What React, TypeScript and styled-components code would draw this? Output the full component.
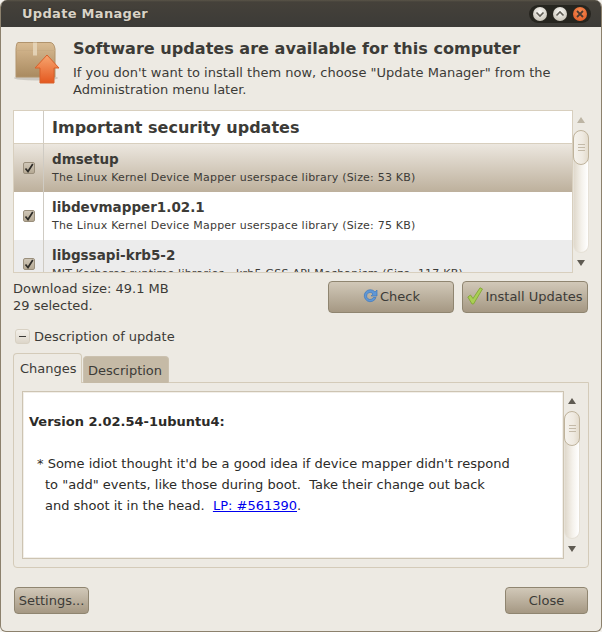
import React from "react";
import styled, { createGlobalStyle } from "styled-components";

const Global = createGlobalStyle`
  html, body { margin: 0; padding: 0; background: #f4f2ee; }
  * { box-sizing: border-box; }
`;

const Win = styled.div`
  width: 602px;
  height: 632px;
  display: flex;
  flex-direction: column;
  overflow: hidden;
  background: #edeae3;
  border: 1px solid #8c816d;
  border-top: 0;
  border-radius: 7px 7px 6px 6px;
  font-family: "DejaVu Sans", sans-serif;
  font-size: 13px;
  line-height: 17px;
  color: #3c3b37;
`;

const TitleBar = styled.div`
  height: 27px;
  flex: none;
  margin: 0 -1px;
  display: flex;
  align-items: center;
  justify-content: space-between;
  padding: 0 11px 0 22px;
  background: linear-gradient(#5a5448 0, #45413a 2px, #3c3b37 100%);
`;

const WinTitle = styled.div`
  font-weight: bold;
  font-size: 13px;
  letter-spacing: 0.3px;
  color: #d9d3c6;
  text-shadow: 0 0 2px #2a2925;
`;

const Controls = styled.div`
  display: flex;
  align-items: center;
  gap: 4px;
  height: 18px;
  padding: 0 3px;
  border-radius: 9px;
  background: #26251f;
`;

const WmDot = styled.svg`
  display: block;
  width: 16px;
  height: 16px;
`;

const Body = styled.div`
  flex: 1;
  display: flex;
  flex-direction: column;
  padding: 0 12px;
`;

const Header = styled.div`
  height: 83px;
  display: flex;
  padding-top: 13px;
  gap: 11px;
`;

const PackageSvg = styled.svg`
  flex: none;
  width: 48px;
  height: 48px;
  margin: 1px 0 0 1px;
`;

const HeaderTitle = styled.div`
  font-weight: bold;
  font-size: 16.07px;
  line-height: 17px;
  margin-bottom: 7px;
`;

const HeaderText = styled.div`
  width: 500px;
`;

const ListArea = styled.div`
  display: flex;
  height: 163px;
`;

const List = styled.div`
  width: 560px;
  height: 163px;
  overflow: hidden;
  border: 1px solid #d8cfbe;
  background: #fff;
`;

const Row = styled.div<{ $tone: "head" | "selected" | "white" | "grey" }>`
  display: flex;
  flex: none;
  height: ${(p) => (p.$tone === "head" ? "33px" : "48px")};
  background: ${(p) =>
    p.$tone === "selected"
      ? "linear-gradient(#ece7df, #bdb09c)"
      : p.$tone === "grey"
        ? "#ececec"
        : "#fff"};
  border-bottom: ${(p) => (p.$tone === "head" ? "1px solid #d8cfbe" : "0")};
`;

const CheckCell = styled.div`
  width: 30px;
  flex: none;
  display: flex;
  align-items: center;
  justify-content: center;
  border-right: 1px solid #cfcbc3;
`;

const Check = styled.div`
  width: 12px;
  height: 12px;
  display: flex;
  align-items: center;
  justify-content: center;
  border: 1px solid #9a8f7c;
  border-radius: 2px;
  background: linear-gradient(#cfc6b7, #b5a994);
`;

const TextCell = styled.div`
  padding: 6px 0 0 8px;
  min-width: 0;
  white-space: nowrap;
`;

const SectionTitle = styled.div`
  font-weight: bold;
  font-size: 16px;
  line-height: 20px;
  margin-top: 1px;
`;

const PkgName = styled.div`
  font-weight: bold;
  font-size: 13.5px;
  line-height: 18px;
  margin-bottom: 1px;
`;

const PkgDesc = styled.div`
  font-size: 11px;
  letter-spacing: 0.21px;
  line-height: 18px;
`;

const ScrollBar = styled.div`
  width: 16px;
  flex: none;
  display: flex;
  flex-direction: column;
  color: #5f5b52;
`;

const ArrowBox = styled.div<{ $dim?: boolean }>`
  height: 20px;
  flex: none;
  display: flex;
  align-items: center;
  justify-content: center;
  color: ${(p) => (p.$dim ? "#bdb5a4" : "#5f5b52")};
`;

const Trough = styled.div`
  flex: 1;
  border-radius: 8px;
  background: linear-gradient(90deg, #e0d9cc, #f5f2ec 55%, #fff);
  border: 1px solid #e6e1d7;
  border-top: 0;
`;

const Thumb = styled.div`
  height: 35px;
  margin: 0 -1px;
  display: flex;
  flex-direction: column;
  gap: 2px;
  align-items: center;
  justify-content: center;
  border: 1px solid #bfb39c;
  border-radius: 8px;
  background: linear-gradient(90deg, #f5f2ec, #efeae1 60%, #e4dccd);
`;

const Grip = styled.div`
  width: 7px;
  height: 1px;
  background: #c4baa8;
`;

const Actions = styled.div`
  height: 34px;
  margin: 7px 1px 0 0;
  display: flex;
  gap: 8px;
  align-items: flex-start;
`;

const Download = styled.div`
  flex: 1;
`;

const Button = styled.div<{ $wide?: boolean }>`
  display: flex;
  align-items: center;
  justify-content: center;
  gap: ${(p) => (p.$wide ? "2px" : "0")};
  width: ${(p) => (p.$wide ? "126px" : "75px")};
  height: ${(p) => (p.$wide ? "32px" : "27px")};
  margin-top: ${(p) => (p.$wide ? "1px" : "0")};
  padding-bottom: ${(p) => (p.$wide ? "2px" : "0")};
  border: 1px solid #8f8570;
  border-radius: 4px;
  background: linear-gradient(#d1c8b8, #a59883);
  color: #3c3b37;
  white-space: nowrap;
`;

const Expander = styled.div`
  display: flex;
  align-items: center;
  gap: 4px;
  height: 17px;
  margin-top: 14px;
  padding-left: 2px;
`;

const ExpanderBox = styled.div`
  width: 15px;
  height: 15px;
  display: flex;
  align-items: center;
  justify-content: center;
  border: 1px solid #d8d1c3;
  border-radius: 3px;
  background: linear-gradient(#f3f0ea, #ddd6c9);
`;

const Minus = styled.div`
  width: 7px;
  height: 1px;
  background: #3c3b37;
`;

const Tabs = styled.div`
  display: flex;
  align-items: flex-end;
  height: 30px;
  margin-top: 8px;
  position: relative;
  z-index: 1;
`;

const Tab = styled.div<{ $active?: boolean }>`
  height: ${(p) => (p.$active ? "30px" : "27px")};
  width: ${(p) => (p.$active ? "69px" : "86px")};
  padding: ${(p) => (p.$active ? "6px 0 0 6px" : "5px 0 0 4px")};
  margin-left: ${(p) => (p.$active ? "0" : "1px")};
  background: ${(p) => (p.$active ? "#edeae3" : "#c5baa6")};
  border: 1px solid ${(p) => (p.$active ? "#d4cbb9" : "#cbc1af")};
  border-bottom: 0;
  border-radius: 4px 4px 0 0;
`;

const Notebook = styled.div`
  height: 186px;
  margin-top: -1px;
  display: flex;
  padding: 8px;
  border: 1px solid #d4cbb9;
  border-radius: 0 0 4px 4px;
`;

const Frame = styled.div`
  width: 542px;
  height: 168px;
  padding: 1px;
  border: 1px solid #cdc4b2;
  background: #f2efe9;
`;

const Changes = styled.div`
  height: 100%;
  padding: 18px 0 0 5px;
  background: #fff;
  color: #2c2b28;
  line-height: 21px;
`;

const ChangeLine = styled.div<{ $indent?: number; $bold?: boolean }>`
  min-height: 21px;
  padding-left: ${(p) => p.$indent ?? 0}px;
  font-weight: ${(p) => (p.$bold ? "bold" : "normal")};
  white-space: pre;
`;

const BugLink = styled.a`
  color: #0000ee;
  text-decoration: underline;
`;

const Footer = styled.div`
  display: flex;
  justify-content: space-between;
  margin-top: 19px;
  padding: 0 1px;
`;

const CloseButton = styled(Button)`
  width: 83px;
`;

function Arrow({ up }: { up?: boolean }) {
  return (
    <svg width="8" height="6" viewBox="0 0 8 6">
      <path d={up ? "M4 0 8 6H0Z" : "M0 0H8L4 6Z"} fill="currentColor" />
    </svg>
  );
}

function Scroll({ dim }: { dim?: boolean }) {
  return (
    <ScrollBar>
      <ArrowBox $dim={dim}>
        <Arrow up />
      </ArrowBox>
      <Trough>
        <Thumb>
          <Grip />
          <Grip />
          <Grip />
        </Thumb>
      </Trough>
      <ArrowBox>
        <Arrow />
      </ArrowBox>
    </ScrollBar>
  );
}

function Tick() {
  return (
    <svg width="10" height="10" viewBox="0 0 10 10">
      <path d="M1.5 5.5 4 8.5 8.8 1" fill="none" stroke="#2e2c28" strokeWidth="1.7" />
    </svg>
  );
}

function WmButton({ kind }: { kind: "min" | "max" | "close" }) {
  const close = kind === "close";
  return (
    <WmDot viewBox="0 0 16 16">
      <defs>
        <radialGradient id="wmLight" cx="50%" cy="35%" r="65%">
          <stop offset="0" stopColor="#fbfaf7" />
          <stop offset="1" stopColor="#c9c4b8" />
        </radialGradient>
        <radialGradient id="wmClose" cx="50%" cy="35%" r="65%">
          <stop offset="0" stopColor="#f78e55" />
          <stop offset="1" stopColor="#e35f2a" />
        </radialGradient>
      </defs>
      <circle cx="8" cy="8" r="7" fill={close ? "url(#wmClose)" : "url(#wmLight)"} />
      {kind === "min" && <path d="M4.5 6.5 8 10l3.5-3.5" fill="none" stroke="#5f5c54" strokeWidth="1.6" />}
      {kind === "max" && <path d="M4.5 9.5 8 6l3.5 3.5" fill="none" stroke="#5f5c54" strokeWidth="1.6" />}
      {close && <path d="M5 5l6 6M11 5l-6 6" fill="none" stroke="#4c3a30" strokeWidth="1.8" />}
    </WmDot>
  );
}

function PackageIcon() {
  return (
    <PackageSvg viewBox="0 0 48 48">
      <defs>
        <linearGradient id="boxFill" x1="0" y1="0" x2="0" y2="1">
          <stop offset="0" stopColor="#d9bc94" />
          <stop offset="1" stopColor="#a98a60" />
        </linearGradient>
        <linearGradient id="upArrow" x1="0" y1="0" x2="0" y2="1">
          <stop offset="0" stopColor="#f7a670" />
          <stop offset="1" stopColor="#e4581f" />
        </linearGradient>
      </defs>
      <ellipse cx="22" cy="37" rx="22" ry="2.5" fill="#8f8a80" opacity="0.35" />
      <path d="M4 1.5 H36 Q40 1.5 41 8 V36 H2 V8 Q2.5 1.5 4 1.5Z" fill="url(#boxFill)" stroke="#b1946d" />
      <path d="M2.5 9.5 H41" stroke="#c8ab83" />
      <rect x="19" y="1.5" width="4" height="13" fill="#e9d9bf" opacity="0.8" />
      <path d="M26 42V27H21L33 14 45 27H40V42Z" fill="url(#upArrow)" stroke="#d9602a" />
    </PackageSvg>
  );
}

function RefreshIcon() {
  return (
    <svg width="16" height="16" viewBox="0 0 16 16">
      <path
        d="M14 9.5A6 6 0 1 1 13 4L15 2V8H9L11 6A3.5 3.5 0 1 0 11.3 9.5Z"
        fill="#5f97d6"
        stroke="#3f78bb"
        strokeWidth="0.7"
      />
    </svg>
  );
}

function GreenCheck() {
  return (
    <svg width="16" height="18" viewBox="0 0 16 18">
      <path d="M0.8 10 3.5 8 6 11.5 13 0.8 15.5 2 6.5 17 5 17Z" fill="#a9cf54" stroke="#7da32f" strokeWidth="0.8" />
    </svg>
  );
}

const packages = [
  { name: "dmsetup", desc: "The Linux Kernel Device Mapper userspace library (Size: 53 KB)", tone: "selected" as const },
  { name: "libdevmapper1.02.1", desc: "The Linux Kernel Device Mapper userspace library (Size: 75 KB)", tone: "white" as const },
  { name: "libgssapi-krb5-2", desc: "MIT Kerberos runtime libraries - krb5 GSS-API Mechanism (Size: 117 KB)", tone: "grey" as const },
];

export default function App() {
  return (
    <>
      <Global />
      <Win>
        <TitleBar>
          <WinTitle>Update Manager</WinTitle>
          <Controls>
            <WmButton kind="min" />
            <WmButton kind="max" />
            <WmButton kind="close" />
          </Controls>
        </TitleBar>
        <Body>
          <Header>
            <PackageIcon />
            <HeaderText>
              <HeaderTitle>Software updates are available for this computer</HeaderTitle>
              If you don't want to install them now, choose "Update Manager" from the Administration menu later.
            </HeaderText>
          </Header>

          <ListArea>
            <List>
              <Row $tone="head">
                <CheckCell />
                <TextCell>
                  <SectionTitle>Important security updates</SectionTitle>
                </TextCell>
              </Row>
              {packages.map((pkg) => (
                <Row key={pkg.name} $tone={pkg.tone}>
                  <CheckCell>
                    <Check>
                      <Tick />
                    </Check>
                  </CheckCell>
                  <TextCell>
                    <PkgName>{pkg.name}</PkgName>
                    <PkgDesc>{pkg.desc}</PkgDesc>
                  </TextCell>
                </Row>
              ))}
            </List>
            <Scroll dim />
          </ListArea>

          <Actions>
            <Download>
              Download size: 49.1 MB
              <br />
              29 selected.
            </Download>
            <Button $wide>
              <RefreshIcon />
              Check
            </Button>
            <Button $wide>
              <GreenCheck />
              Install Updates
            </Button>
          </Actions>

          <Expander>
            <ExpanderBox>
              <Minus />
            </ExpanderBox>
            Description of update
          </Expander>

          <Tabs>
            <Tab $active>Changes</Tab>
            <Tab>Description</Tab>
          </Tabs>
          <Notebook>
            <Frame>
              <Changes>
                <ChangeLine $bold>Version 2.02.54-1ubuntu4:</ChangeLine>
                <ChangeLine />
                <ChangeLine $indent={8}>* Some idiot thought it'd be a good idea if device mapper didn't respond</ChangeLine>
                <ChangeLine $indent={16}>to "add" events, like those during boot.  Take their change out back</ChangeLine>
                <ChangeLine $indent={16}>
                  and shoot it in the head.  <BugLink href="#">LP: #561390</BugLink>.
                </ChangeLine>
              </Changes>
            </Frame>
            <Scroll />
          </Notebook>

          <Footer>
            <Button>Settings...</Button>
            <CloseButton>Close</CloseButton>
          </Footer>
        </Body>
      </Win>
    </>
  );
}
